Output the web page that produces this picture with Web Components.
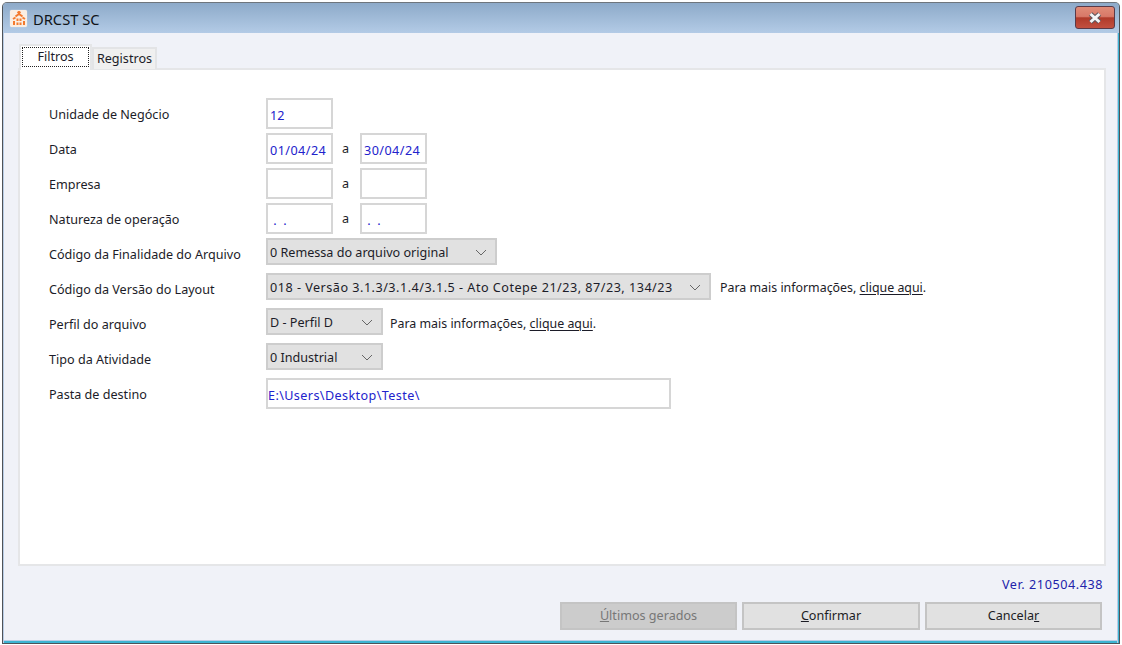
<!DOCTYPE html>
<html lang="pt"><head><meta charset="utf-8"><title>DRCST SC</title>
<style>
html,body{margin:0;padding:0;width:1122px;height:645px;overflow:hidden;background:#fff}
body{font:12.6px/15px "Noto Sans","Open Sans",sans-serif;color:#1c1c24}
</style></head><body>
<win-dialog>
  <tab-bar slot="tabs"></tab-bar>
  <form-row label="Unidade de Negócio"><text-box w="67" value="12"></text-box></form-row>
  <form-row label="Data"><text-box w="67" ls=".45" value="01/04/24"></text-box><span-a></span-a><text-box w="67" ls=".45" value="30/04/24"></text-box></form-row>
  <form-row label="Empresa"><text-box w="67"></text-box><span-a></span-a><text-box w="67"></text-box></form-row>
  <form-row label="Natureza de operação"><text-box w="67" value=" .  ."></text-box><span-a></span-a><text-box w="67" value=" .  ."></text-box></form-row>
  <form-row label="Código da Finalidade do Arquivo"><combo-box w="231" value="0 Remessa do arquivo original"></combo-box></form-row>
  <form-row label="Código da Versão do Layout"><combo-box w="445" ls=".5" value="018 - Versão 3.1.3/3.1.4/3.1.5 - Ato Cotepe 21/23, 87/23, 134/23"></combo-box><info-link gap="9" top="7"></info-link></form-row>
  <form-row label="Perfil do arquivo"><combo-box w="117" value="D - Perfil D"></combo-box><info-link gap="7" top="8"></info-link></form-row>
  <form-row label="Tipo da Atividade"><combo-box w="117" value="0 Industrial"></combo-box></form-row>
  <form-row label="Pasta de destino"><text-box w="405" ls=".4" pad="0" value="E:\Users\Desktop\Teste\"></text-box></form-row>
  <span slot="version">Ver. 210504.438</span>
  <flat-button slot="actions" disabled><u>Ú</u>ltimos gerados</flat-button>
  <flat-button slot="actions" wide><u>C</u>onfirmar</flat-button>
  <flat-button slot="actions">Cancela<u>r</u></flat-button>
</win-dialog>
<script>
function def(name, css, html, init){
  customElements.define(name, class extends HTMLElement{
    connectedCallback(){
      if(this.shadowRoot) return;
      const s=this.attachShadow({mode:'open'});
      const a=n=>this.getAttribute(n)||'';
      s.innerHTML='<style>'+css+'</style>'+(typeof html==='function'?html(a):html);
      if(init) init.call(this,a);
    }
  });
}
const chev='<svg width="12" height="7" viewBox="0 0 12 7" aria-hidden="true"><path d="M1 1l5 5 5-5" fill="none" stroke="#666" stroke-width="1"/></svg>';
def('win-dialog',`
:host{display:block;position:relative;box-sizing:border-box;margin:2px 2px 1px 2px;width:1118px;height:642px;background:#f0f2f8;border:1px solid #4f5358;border-top-color:#6e757c;border-radius:5px 5px 0 0;box-shadow:inset 1px 0 0 #b9cde6,inset -1px 0 0 #3cb4d2,inset -2px 0 0 #b9cde6,inset 0 -2px 0 #3cb4d2,inset 0 -3px 0 #b9cde6;}
.title{height:30px;display:flex;align-items:center;padding:0 4px 0 7px;gap:6px;background:linear-gradient(#8daac9,#b3cbe6);border-radius:4px 4px 0 0;font-size:14.7px;color:#101418}
.ico{width:17px;height:17px;background:#fbeee2;display:flex;align-items:center;justify-content:center;border-radius:2px;box-shadow:0 0 1px #fff}
.title b{font-weight:400;flex:1;padding-top:2px}
.close{width:40px;height:23px;margin-top:-1px;box-sizing:border-box;border:1px solid #5a3a48;border-radius:3px;background:linear-gradient(#e08c78 0,#d87868 45%,#b03a2a 52%,#c25040 100%);display:flex;align-items:center;justify-content:center}
.wrap{padding:11px 13px 0 15px}
.tabs{height:25px;position:relative;z-index:1}
.panel{box-sizing:border-box;height:498px;margin-top:-1px;background:#fff;border:2px solid #e5e6e8;padding:28px 0 0 29px;display:flex;flex-direction:column;gap:4px}
.ver{text-align:right;color:#2222aa;padding:11px 3px 0 0;height:33px;box-sizing:border-box;letter-spacing:.57px}
.act{display:flex;justify-content:flex-end;gap:5px;padding:3px 4px 0 0}
`,`<div class="title"><span class="ico"><svg width="14" height="14" viewBox="0 0 14 14" aria-hidden="true"><g fill="none" stroke="#f47a2e" stroke-width="2"><path d="M5.5 2L7 .8 8.500 2M3.500 5.500L7 3 10.500 5.500M1 8l2.500-1.500M13 8l-2.500-1.500M2 10v4M5.500 7.500v2.500M8.500 7.500v2.500M12 10v4M5.500 11.500V14M8.500 11.500V14"/></g></svg></span><b>DRCST SC</b><span class="close"><svg width="18" height="12" viewBox="0 0 18 12" aria-hidden="true"><path d="M4.500 2l9 8M13.500 2l-9 8" stroke="#5c555c" stroke-width="5"/><path d="M4.500 2l9 8M13.500 2l-9 8" stroke="#f4f4f6" stroke-width="3"/></svg></span></div>
<div class="wrap"><div class="tabs"><slot name="tabs"></slot></div><div class="panel"><slot></slot></div><div class="ver"><slot name="version"></slot></div><div class="act"><slot name="actions"></slot></div></div>`);
def('tab-bar',`
:host{display:flex;align-items:flex-end;height:25px;color:#1c1c28}
.t{box-sizing:border-box}
.a{width:73px;height:26px;background:#fff;border:2px solid #e5e6e8;border-bottom:0;padding:1px;margin-left:1px;margin-bottom:-1px;position:relative}
.a span{display:block;box-sizing:border-box;height:20px;border:1px dotted #222;text-align:center;line-height:17px}
.i{width:65px;height:22px;background:#f0f0f0;border:2px solid #e3e4e6;border-bottom:0;text-align:center;line-height:19px}
`,`<div class="t a"><span>Filtros</span></div><div class="t i">Registros</div>`);
def('form-row',`
:host{display:flex;height:31px}
.l{width:217px;flex:none;color:#1c1c28;line-height:33px}
.c{display:flex;align-items:flex-start}
`,a=>`<div class="l">${a('label')}</div><div class="c"><slot></slot></div>`);
def('text-box',`
:host{display:block;box-sizing:border-box;background:#fff;border:2px solid #d6d6d6;height:31px;color:#2222cc;line-height:23px;padding-top:4px;white-space:pre}
`,a=>a('value').replace(/&/g,'&amp;'),function(a){this.style.width=a('w')+'px';this.style.paddingLeft=(a('pad')||2)+'px';if(a('ls'))this.style.letterSpacing=a('ls')+'px'});
def('span-a',`:host{display:block;width:27px;box-sizing:border-box;padding:8px 2px 0 0;text-align:center;color:#1c1c28}`,'a');
def('combo-box',`
:host{display:flex;align-items:center;box-sizing:border-box;background:#e1e1e1;border:2px solid #cdcdcd;height:27px;padding:1px 8px 0 2px;color:#1c1c28;}
span{flex:1;white-space:nowrap}
svg{flex:none}
`,a=>`<span>${a('value')}</span>${chev}`,function(a){this.style.width=a('w')+'px';if(a('ls'))this.style.letterSpacing=a('ls')+'px'});
def('info-link',`:host{display:block;white-space:nowrap;color:#1c1c28;font-size:12.4px}u{text-underline-offset:2px}`,'Para mais informações, <u>clique aqui</u>.',function(a){this.style.marginLeft=a('gap')+'px';this.style.paddingTop=a('top')+'px'});
def('flat-button',`
:host{display:block;box-sizing:border-box;width:177px;height:28px;background:#e1e1e1;border:2px solid #c4c4c4;text-align:center;line-height:24px;color:#1c1c24}
:host([wide]){width:178px}
:host([disabled]){background:#cccccc;border-color:#c4c4c4;color:#777}
`,'<slot></slot>');
</script>
</body></html>
